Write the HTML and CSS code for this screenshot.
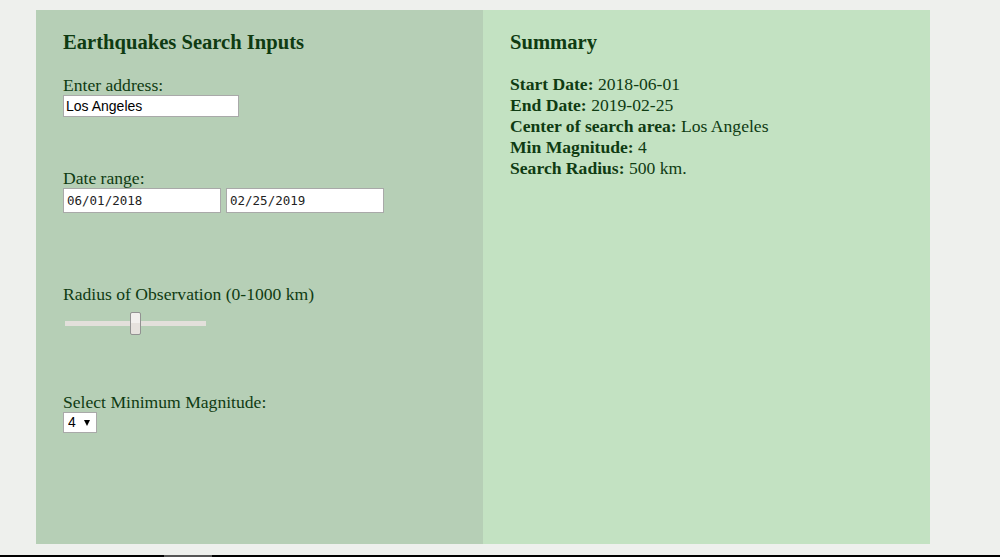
FILE: index.html
```html
<!DOCTYPE html>
<html>
<head>
<meta charset="utf-8">
<link rel="stylesheet" href="styles.css">
</head>
<body>
<div class="page">
  <div class="wrap">
    <section class="panel inputs">
      <h3 class="title">Earthquakes Search Inputs</h3>
      <div class="field f-address">
        <label>Enter address:</label>
        <input class="text" type="text" value="Los Angeles">
      </div>
      <div class="field f-date">
        <label>Date range:</label>
        <div class="dates">
          <input class="date" type="text" value="06/01/2018">
          <input class="date" type="text" value="02/25/2019">
        </div>
      </div>
      <div class="field f-radius">
        <label>Radius of Observation (0-1000 km)</label>
        <input class="range" type="range" min="0" max="1000" value="500">
      </div>
      <div class="field f-mag">
        <label>Select Minimum Magnitude:</label>
        <span class="select-wrap"><select class="select"><option>4</option></select></span>
      </div>
    </section>
    <section class="panel summary">
      <h3 class="title">Summary</h3>
      <div class="lines">
        <div><b>Start Date:</b> 2018-06-01</div>
        <div><b>End Date:</b> 2019-02-25</div>
        <div><b>Center of search area:</b> Los Angeles</div>
        <div><b>Min Magnitude:</b> 4</div>
        <div><b>Search Radius:</b> 500 km.</div>
      </div>
    </section>
  </div>
</div>
<div class="scrollbar"><span class="thumb"></span></div>
</body>
</html>
```
FILE: styles.css
```css
html, body { margin: 0; padding: 0; }
body {
  background: #eef0ed;
  font-family: "Liberation Serif", "Times New Roman", serif;
  color: #0f3b12;
  width: 1000px;
  height: 557px;
  overflow: hidden;
}
.page { padding: 10px 0 0 36px; height: 545px; }
.wrap { display: flex; width: 894px; height: 534px; }
.panel { flex: 1; padding: 0 27px; box-sizing: border-box; }
.inputs { background: #b6cfb6; }
.summary { background: #c3e2c2; }
.title {
  font-size: 20.6px;
  font-weight: bold;
  margin: 21px 0 0;
  line-height: 23px;
}
.field label { display: block; font-size: 17.6px; line-height: 20px; }
.f-address { margin-top: 21px; }
.text {
  display: block;
  box-sizing: border-box;
  width: 176px; height: 22px;
  margin: 0;
  border: 1px solid #a9a9a9;
  padding: 0 2px;
  font-family: "Liberation Sans", Arial, sans-serif;
  font-size: 14px;
  color: #000;
  background: #fff;
}
.f-date { margin-top: 51px; }
.dates { display: flex; gap: 5px; }
.date {
  box-sizing: border-box;
  width: 158px; height: 25px;
  margin: 0;
  border: 1px solid #a9a9a9;
  padding: 0 3px;
  font-family: "DejaVu Sans Mono", monospace;
  font-size: 12.5px;
  color: #222;
  background: #fff;
}
.f-radius { margin-top: 71px; }
.range {
  -webkit-appearance: none;
  appearance: none;
  display: block;
  width: 145px; height: 24px;
  margin: 7px 0 0 0;
  background: transparent;
}
.range::-webkit-slider-runnable-track {
  height: 5px;
  background: #e3e0db;
  margin: 0 2px;
}
.range::-webkit-slider-thumb {
  -webkit-appearance: none;
  width: 11px; height: 23px;
  margin-top: -9px;
  box-sizing: border-box;
  border: 1px solid #929292;
  border-radius: 2px;
  background: linear-gradient(#f2f0ee 0 50%, #e6e2de 50%);
}
.f-mag { margin-top: 57px; }
.select-wrap { position: relative; display: block; width: 34px; height: 21px; }
.select {
  -webkit-appearance: none;
  appearance: none;
  display: block;
  box-sizing: border-box;
  width: 34px; height: 21px;
  margin: 0;
  border: 1px solid #a9a9a9;
  background: #fff;
  font-family: "Liberation Sans", Arial, sans-serif;
  font-size: 14px;
  line-height: 19px;
  padding: 0 0 0 4px;
  color: #000;
}
.select-wrap::after {
  content: "";
  position: absolute;
  left: 21px; top: 8px;
  border-left: 3.5px solid transparent;
  border-right: 3.5px solid transparent;
  border-top: 6px solid #000;
  pointer-events: none;
}
.lines { margin-top: 20px; font-size: 17.6px; line-height: 21px; }
.scrollbar { height: 2px; background: #000; display: flex; }
.thumb { width: 48px; height: 2px; margin-left: 164px; background: #555; }
```
